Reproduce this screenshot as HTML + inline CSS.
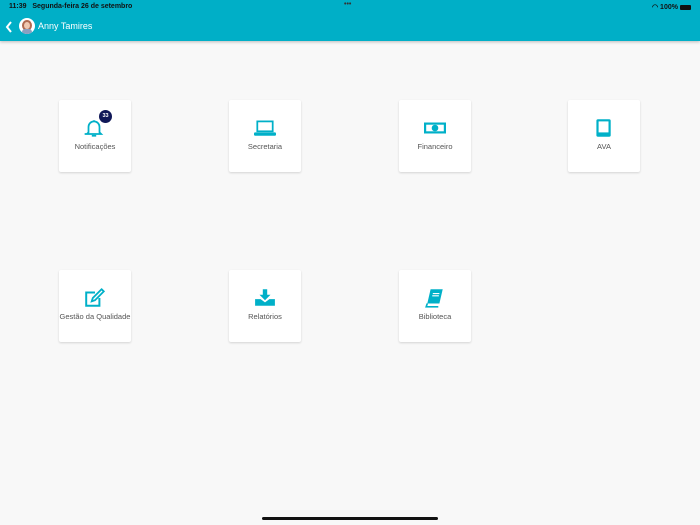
<!DOCTYPE html>
<html><head><meta charset="utf-8"><style>
*{margin:0;padding:0;box-sizing:border-box}
body{width:700px;height:525px;background:#f8f8f8;font-family:"Liberation Sans",sans-serif;position:relative;overflow:hidden}
.hdr{position:absolute;left:0;top:0;width:700px;height:41px;background:#00afc7;box-shadow:0 1px 3px rgba(0,0,0,.25)}
.st{position:absolute;top:3px;font-size:7px;color:#111;font-weight:600}
.card{position:absolute;width:72px;height:72px;background:#fff;border-radius:2px;box-shadow:0 1px 2px rgba(0,0,0,.15)}
.card svg{position:absolute;left:26px;top:19px;transform:scale(1.1);transform-origin:50% 50%}
.lbl{position:absolute;left:-10px;right:-10px;top:42px;text-align:center;font-size:7.5px;color:#555}
.badge{position:absolute;left:40px;top:10px;width:13px;height:13px;border-radius:50%;background:#101858;color:#fff;font-size:5.5px;font-weight:bold;text-align:center;line-height:13px}
.bar{position:absolute;left:262px;top:517px;width:176px;height:3px;border-radius:2px;background:#111}
</style></head><body>
<div class="hdr">
<div class="st" style="left:9px">11:39&nbsp;&nbsp;&nbsp;Segunda-feira 26 de setembro</div>
<div class="st" style="left:344px;top:1px;color:#333">•••</div>
<div class="st" style="left:652px">◠ 100% <span style="display:inline-block;width:11px;height:5px;background:#111;border-radius:1px;vertical-align:middle"></span></div>
<svg style="position:absolute;left:5px;top:21px" width="8" height="12" viewBox="0 0 8 12"><path d="M6 1L2 6l4 5" stroke="#fff" stroke-width="2" fill="none"/></svg>
<div style="position:absolute;left:19px;top:18px;width:16px;height:16px;border-radius:50%;background:#fff;overflow:hidden"><div style="position:absolute;left:3px;top:2px;width:10px;height:11px;border-radius:50%;background:#b06a50"></div><div style="position:absolute;left:5px;top:4px;width:6px;height:7px;border-radius:50%;background:#f0c8b0"></div><div style="position:absolute;left:3px;top:11px;width:10px;height:6px;border-radius:4px;background:#8a9fc0"></div></div>
<div style="position:absolute;left:38px;top:21px;font-size:9px;color:#fff">Anny Tamires</div>
</div>

<div class="card" style="left:59px;top:100px"><svg width="18" height="18" viewBox="0 0 18 18"><path d="M4 13V8a5 5 0 0 1 10 0v5l1.5 1.5h-15L2.5 14.5z" fill="none" stroke="#00b0c8" stroke-width="1.6"/><path d="M7 16h4" stroke="#00b0c8" stroke-width="1.6"/><path d="M9 2v1" stroke="#00b0c8" stroke-width="1.6"/></svg><div class="badge">33</div><div class="lbl">Notificações</div></div>
<div class="card" style="left:229px;top:100px"><svg width="20" height="18" viewBox="0 0 20 18"><rect x="3" y="3" width="14" height="9" fill="none" stroke="#00b0c8" stroke-width="1.6"/><rect x="0" y="13" width="20" height="3" rx="1" fill="#00b0c8"/></svg><div class="lbl">Secretaria</div></div>
<div class="card" style="left:399px;top:100px"><svg width="20" height="18" viewBox="0 0 20 18"><rect x="0" y="4" width="20" height="10" fill="#00b0c8"/><rect x="2" y="6" width="16" height="6" fill="#fff"/><circle cx="10" cy="9" r="3" fill="#00b0c8"/></svg><div class="lbl">Financeiro</div></div>
<div class="card" style="left:568px;top:100px"><svg width="18" height="18" viewBox="0 0 18 18"><rect x="3" y="1" width="13" height="16" rx="1.5" fill="#00b0c8"/><rect x="5" y="3" width="9" height="10" fill="#fff"/></svg><div class="lbl">AVA</div></div>

<div class="card" style="left:59px;top:270px"><svg width="20" height="18" viewBox="0 0 20 18"><path d="M10 4H2v12h12V9" fill="none" stroke="#00b0c8" stroke-width="1.8"/><path d="M7 12l1-3 8-8 2 2-8 8z" fill="none" stroke="#00b0c8" stroke-width="1.6"/></svg><div class="lbl">Gestão da Qualidade</div></div>
<div class="card" style="left:229px;top:270px"><svg width="20" height="18" viewBox="0 0 20 18"><path d="M8 1h4v5h3l-5 5-5-5h3z" fill="#00b0c8"/><path d="M1 10h5l4 3 4-3h5v6H1z" fill="#00b0c8"/></svg><div class="lbl">Relatórios</div></div>
<div class="card" style="left:399px;top:270px"><svg width="20" height="18" viewBox="0 0 20 18"><path d="M6 1h11l-3 13H3z" fill="#00b0c8"/><path d="M3 14l-1 3h11" fill="none" stroke="#00b0c8" stroke-width="1.5"/><path d="M8 5h6M7.5 7h6" stroke="#fff" stroke-width="1"/></svg><div class="lbl">Biblioteca</div></div>

<div class="bar"></div>
</body></html>
